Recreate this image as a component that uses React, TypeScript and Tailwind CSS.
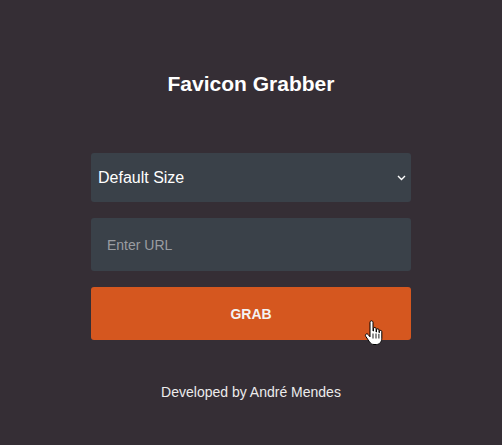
import { useState } from "react";

const HandCursor = () => (
  <svg
    className="absolute left-[364px] top-[320px] pointer-events-none"
    width="20"
    height="28"
    viewBox="0 0 20 28"
  >
    <path
      d="M6 2.5c0-1 .7-1.7 1.5-1.7S9 1.5 9 2.5V11h.5V8.8c0-.9.6-1.4 1.3-1.4s1.3.5 1.3 1.4V12h.4v-2c0-.8.6-1.3 1.3-1.3s1.2.5 1.2 1.3v2.6h.4V11.6c0-.8.6-1.2 1.2-1.2s1.2.4 1.2 1.2v6.6c0 3.3-2.2 6.300-5.4 6.3H10c-2 0-3.4-1-4.5-2.6L1.7 16.3c-.6-.9-.3-1.8.4-2.2.7-.4 1.5-.2 2.1.5L6 16.8V2.5z"
      fill="#fff"
      stroke="#000"
      strokeWidth="1"
      strokeLinejoin="round"
    />
    <path d="M9 13.5v5M12 13.5v5M14.9 13.8v4.7" stroke="#000" strokeWidth="0.9" />
  </svg>
);

const App = () => {
  const [size, setSize] = useState("default");
  const [url, setUrl] = useState("");

  return (
    <div
      className="relative w-[502px] h-[445px] bg-[#352e35] flex flex-col items-center text-white"
      style={{ fontFamily: '"Liberation Sans", Arial, sans-serif' }}
    >
      <h2 className="mt-[70px] text-[21px] leading-7 font-bold text-white">Favicon Grabber</h2>

      <div className="mt-[55px] w-[320px] flex flex-col gap-4">
        <div className="relative">
          <select
            value={size}
            onChange={(e) => setSize(e.target.value)}
            className="w-full h-[49px] appearance-none bg-[#3a4149] text-white text-base pl-[7px] rounded-[3px] outline-none"
          >
            <option value="default">Default Size</option>
            <option value="16">16x16</option>
            <option value="32">32x32</option>
            <option value="64">64x64</option>
          </select>
          <svg
            className="absolute right-[5px] top-[22px] pointer-events-none"
            width="9"
            height="6"
            viewBox="0 0 9 6"
          >
            <path d="M1 1l3.5 3.5L8 1" fill="none" stroke="#fff" strokeWidth="1.4" />
          </svg>
        </div>

        <input
          value={url}
          onChange={(e) => setUrl(e.target.value)}
          placeholder="Enter URL"
          className="w-full h-[53px] bg-[#3a4149] text-white text-sm px-4 rounded-[3px] outline-none placeholder:text-[#9a9da2]"
        />

        <button className="w-full h-[53px] bg-[#d5571f] text-[#f3f3f3] text-sm font-bold rounded-[3px]">
          GRAB
        </button>
      </div>

      <p className="mt-[42px] text-sm leading-5 text-[#ececec]">Developed by André Mendes</p>

      <HandCursor />
    </div>
  );
};

export default App;
